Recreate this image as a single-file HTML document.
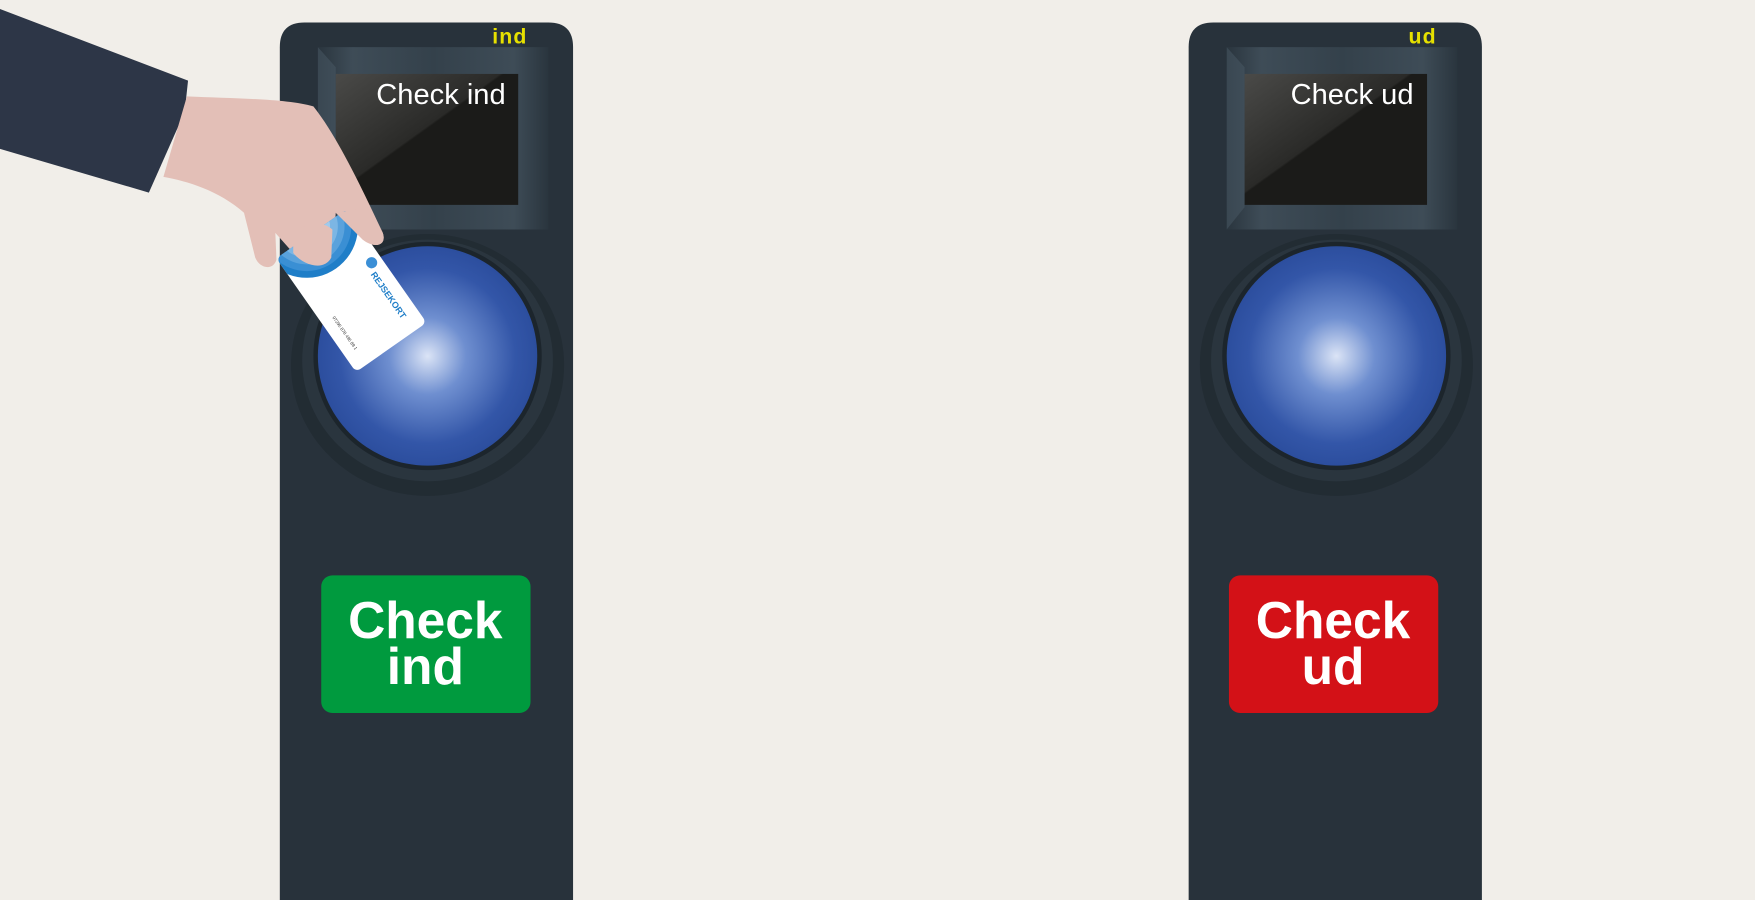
<!DOCTYPE html>
<html><head><style>
html,body{margin:0;padding:0;background:#f1eee9;width:1755px;height:900px;overflow:hidden}
svg{display:block}
text{font-family:"Liberation Sans",Arial,sans-serif}
</style></head><body>
<svg width="1755" height="900" viewBox="0 0 1568 804" xmlns="http://www.w3.org/2000/svg">
<defs>
<radialGradient id="ball" cx="0.5" cy="0.5" r="0.5">
<stop offset="0" stop-color="#dbe4f6"/>
<stop offset="0.35" stop-color="#6f8fd0"/>
<stop offset="0.8" stop-color="#3356a8"/>
<stop offset="1" stop-color="#2c4e9e"/>
</radialGradient>
<linearGradient id="bez" x1="0" y1="0" x2="1" y2="0">
<stop offset="0" stop-color="#2a353e"/>
<stop offset="0.15" stop-color="#3e4c57"/>
<stop offset="0.5" stop-color="#34414b"/>
<stop offset="0.85" stop-color="#3e4c57"/>
<stop offset="1" stop-color="#2a353e"/>
</linearGradient>
<linearGradient id="scr" x1="0" y1="0" x2="1" y2="1">
<stop offset="0" stop-color="#4a4a48"/>
<stop offset="0.45" stop-color="#2a2a28"/>
<stop offset="0.46" stop-color="#1b1b19"/>
<stop offset="1" stop-color="#1b1b19"/>
</linearGradient>
<g id="dev">
<path d="M0,804 L0,42 Q0,20 22,20 L240,20 Q262,20 262,42 L262,804 Z" fill="#28323b"/>
<path d="M34,42 L240,42 L240,205 L34,205 Z" fill="url(#bez)"/>
<path d="M34,42 L50,60 L50,185 L34,205 Z" fill="#4a5a66" opacity="0.5"/>
<rect x="50" y="66" width="163" height="117" fill="url(#scr)"/>
<ellipse cx="132" cy="326" rx="122" ry="117" fill="#222c33"/>
<ellipse cx="132" cy="322" rx="112" ry="108" fill="#2a353e"/>
<circle cx="132" cy="318" r="102" fill="#1c252c"/>
<circle cx="132" cy="318" r="98" fill="url(#ball)"/>
</g>
</defs>
<rect width="1568" height="804" fill="#f1eee9"/>
<use href="#dev" x="250"/>
<use href="#dev" x="1062"/>
<text x="455.5" y="39" font-size="19" font-weight="bold" letter-spacing="1" fill="#e6e000" text-anchor="middle">ind</text>
<text x="1271" y="39" font-size="19" font-weight="bold" letter-spacing="1" fill="#e6e000" text-anchor="middle">ud</text>
<text x="394" y="93" font-size="26" fill="#fff" text-anchor="middle">Check ind</text>
<text x="1208" y="93" font-size="26" fill="#fff" text-anchor="middle">Check ud</text>
<rect x="287" y="514" width="187" height="123" rx="10" fill="#009a3e"/>
<rect x="1098" y="514" width="187" height="123" rx="10" fill="#d31117"/>
<text x="380" y="570" font-size="46" font-weight="bold" fill="#fff" text-anchor="middle">Check</text>
<text x="380" y="611" font-size="46" font-weight="bold" fill="#fff" text-anchor="middle">ind</text>
<text x="1191" y="570" font-size="46" font-weight="bold" fill="#fff" text-anchor="middle">Check</text>
<text x="1191" y="611" font-size="46" font-weight="bold" fill="#fff" text-anchor="middle">ud</text>
<!-- sleeve -->
<path d="M0,8 L168,72 L165,100 L133,172 L0,133 Z" fill="#2d3647"/>
<!-- hand -->
<path d="M167,86 C210,88 255,88 280,95 C300,120 322,165 342,208 C346,220 334,222 324,214 L300,190 L296,230 C290,242 272,238 262,226 L246,208 L247,232 C244,242 232,240 228,230 L218,190 C195,170 168,162 146,158 Z" fill="#e3bfb7"/>
<!-- card -->
<g transform="translate(314,259.5) rotate(-35)">
<clipPath id="cc"><rect x="-38.5" y="-62" width="77" height="124" rx="5"/></clipPath>
<rect x="-38.5" y="-62" width="77" height="124" rx="5" fill="#fff"/>
<g clip-path="url(#cc)">
<circle cx="0" cy="-70" r="46" fill="#1f7ec8"/>
<circle cx="0" cy="-70" r="40" fill="#3a8fd4"/>
<circle cx="0" cy="-70" r="34" fill="#5aa2dc"/>
<circle cx="0" cy="-70" r="28" fill="#7cb6e4"/>
<circle cx="0" cy="-70" r="21" fill="#a0caec"/>
<circle cx="0" cy="-70" r="13" fill="#c6def4"/>
</g>
<circle cx="29" cy="-10" r="5" fill="#3b8fd6"/>
<text transform="translate(22,-2) rotate(90)" font-size="8" font-weight="bold" fill="#1f7ec8">REJSEKORT</text>
<text transform="translate(-28,10) rotate(90)" font-size="4" fill="#333">07295 878 495 89 1</text>
</g>
<!-- fingers over card -->
<path d="M262,226 C272,238 290,242 296,230 L297,205 C285,195 270,200 262,210 Z" fill="#e3bfb7"/>
<path d="M300,190 L324,214 C334,222 346,220 342,208 L330,185 Z" fill="#e3bfb7"/>
</svg>
</body></html>
